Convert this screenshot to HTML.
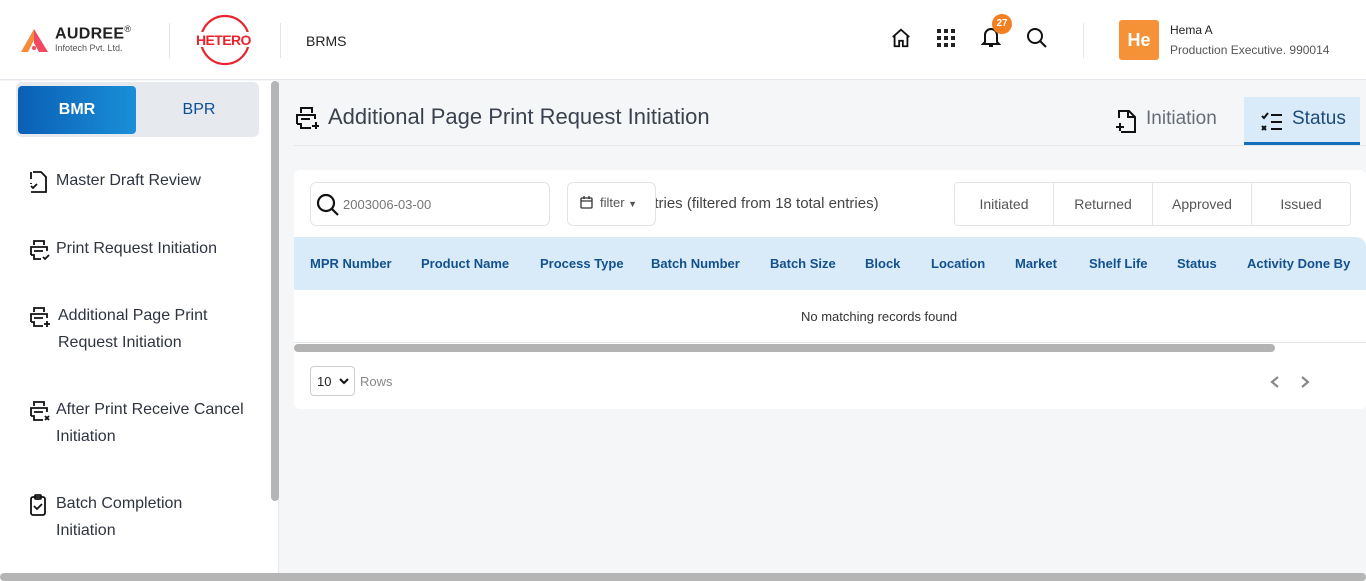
<!DOCTYPE html>
<html><head><meta charset="utf-8"><style>
*{box-sizing:border-box;margin:0;padding:0}
body{width:1366px;height:581px;overflow:hidden;font-family:"Liberation Sans",sans-serif;background:#f5f6f8;position:relative;color:#333}
.hdr{position:absolute;left:0;top:0;width:1366px;height:80px;background:#fff;border-bottom:1px solid #e3e6ea}
.abs{position:absolute}
.side{position:absolute;left:0;top:81px;width:279px;height:500px;background:#fff;border-right:1px solid #e6e8eb}
.tog{position:absolute;left:16px;top:1px;width:243px;height:55px;background:#e6e9ee;border-radius:6px}
.bmr{position:absolute;left:2px;top:4px;width:118px;height:48px;border-radius:4px;background:linear-gradient(90deg,#0a5fb4,#1a8fd8);color:#fff;font-size:16px;font-weight:bold;text-align:center;line-height:48px}
.bpr{position:absolute;left:124px;top:4px;width:118px;height:48px;color:#0d4f94;font-size:16px;text-align:center;line-height:48px}
.it{position:absolute;left:28px;font-size:16px;color:#2e3440;line-height:27px}
.it svg{position:absolute;left:0;top:4px}
.it span{display:block;padding-left:28px}
.th{position:absolute;top:256px;font-size:13px;font-weight:bold;color:#12508e}
</style></head><body>
<div class="hdr">
 <svg class="abs" style="left:21px;top:29px" width="27" height="23" viewBox="0 0 27 23"><path d="M13 0L0 23h7l6-12z" fill="#f58a3a"/><path d="M13 0l14 23h-9l-5-9z" fill="#ef4a60"/><circle cx="13" cy="19" r="2" fill="#ef4a60"/></svg>
 <div class="abs" style="left:55px;top:24px;font-size:16px;font-weight:bold;color:#222;letter-spacing:.3px">AUDREE<sup style="font-size:9px;font-weight:normal">®</sup></div>
 <div class="abs" style="left:55px;top:43px;font-size:9px;color:#555">Infotech Pvt. Ltd.</div>
 <div class="abs" style="left:169px;top:23px;width:1px;height:35px;background:#e5e5e5"></div>
 <svg class="abs" style="left:194px;top:14px" width="62" height="52" viewBox="0 0 62 52"><circle cx="31" cy="26" r="24" fill="none" stroke="#e8232e" stroke-width="2.2"/><rect x="0" y="18" width="62" height="15" fill="#fff"/></svg>
 <div class="abs" style="left:196px;top:32px;font-size:14px;font-weight:bold;color:#e8232e;letter-spacing:-.6px">HETERO</div>
 <div class="abs" style="left:280px;top:23px;width:1px;height:35px;background:#e5e5e5"></div>
 <div class="abs" style="left:306px;top:33px;font-size:14px;color:#222">BRMS</div>
 <svg class="abs" style="left:890px;top:27px" width="22" height="22" viewBox="0 0 24 24" fill="none" stroke="#111" stroke-width="2"><path d="M3 11L12 3l9 8M5 9v12h5v-6h4v6h5V9"/></svg>
 <svg class="abs" style="left:936px;top:28px" width="20" height="20" viewBox="0 0 20 20" fill="#222"><rect x="1" y="1" width="4" height="4"/><rect x="8" y="1" width="4" height="4"/><rect x="15" y="1" width="4" height="4"/><rect x="1" y="8" width="4" height="4"/><rect x="8" y="8" width="4" height="4"/><rect x="15" y="8" width="4" height="4"/><rect x="1" y="15" width="4" height="4"/><rect x="8" y="15" width="4" height="4"/><rect x="15" y="15" width="4" height="4"/></svg>
 <svg class="abs" style="left:981px;top:26px" width="20" height="22" viewBox="0 0 20 22" fill="none" stroke="#111" stroke-width="2"><path d="M4 16V9a6 6 0 0112 0v7l2 2H2zM8 20h4"/></svg>
 <div class="abs" style="left:992px;top:14px;width:20px;height:20px;border-radius:50%;background:#f47f20;color:#fff;font-size:10px;font-weight:bold;text-align:center;line-height:20px">27</div>
 <svg class="abs" style="left:1026px;top:27px" width="22" height="22" viewBox="0 0 22 22" fill="none" stroke="#111" stroke-width="2"><circle cx="9" cy="9" r="7"/><path d="M14 14l6 6"/></svg>
 <div class="abs" style="left:1083px;top:23px;width:1px;height:35px;background:#e5e5e5"></div>
 <div class="abs" style="left:1119px;top:20px;width:40px;height:40px;border-radius:3px;background:#f59237;color:#fff;font-size:18px;font-weight:bold;text-align:center;line-height:40px">He</div>
 <div class="abs" style="left:1170px;top:23px;font-size:12px;color:#222">Hema A</div>
 <div class="abs" style="left:1170px;top:43px;font-size:12px;color:#555">Production Executive. 990014</div>
</div>
<div class="side">
 <div class="tog"><div class="bmr">BMR</div><div class="bpr">BPR</div></div>
 <div class="it" style="top:86px"><svg width="20" height="22" viewBox="0 0 20 22" fill="none" stroke="#111" stroke-width="1.8"><path d="M5 1h8l5 5v15H3M3 13v-1M3 8V1"/><path d="M3 15l2 2 4-4"/></svg><span>Master Draft Review</span></div>
 <div class="it" style="top:154px"><svg width="24" height="22" viewBox="0 0 24 22" fill="none" stroke="#111" stroke-width="1.8"><path d="M6 6V2h10v4M3 16V8h16v4M3 16h3v4h7M6 12h9"/><path d="M15 18l2 2 4-4"/></svg><span>Print Request Initiation</span></div>
 <div class="it" style="top:221px"><svg width="24" height="22" viewBox="0 0 24 22" fill="none" stroke="#111" stroke-width="1.8"><path d="M6 6V2h10v4M3 16V8h16v4M3 16h3v4h9M6 12h9M19 15v6M16 18h6"/></svg><span style="padding-left:30px">Additional Page Print<br>Request Initiation</span></div>
 <div class="it" style="top:315px"><svg width="24" height="22" viewBox="0 0 24 22" fill="none" stroke="#111" stroke-width="1.8"><path d="M6 6V2h10v4M3 16V8h16v4M3 16h3v4h9M6 12h9M17 16l4 4M21 16l-4 4"/></svg><span>After Print Receive Cancel<br>Initiation</span></div>
 <div class="it" style="top:409px"><svg width="20" height="22" viewBox="0 0 20 22" fill="none" stroke="#111" stroke-width="1.8"><rect x="3" y="3" width="14" height="18" rx="2"/><rect x="7" y="1" width="6" height="4" rx="1"/><path d="M6 12l3 3 5-5"/></svg><span>Batch Completion<br>Initiation</span></div>
 <div class="abs" style="left:271px;top:0;width:8px;height:420px;border-radius:4px;background:#b5b5b5"></div>
</div>
<svg class="abs" style="left:295px;top:106px" width="26" height="24" viewBox="0 0 26 24" fill="none" stroke="#111" stroke-width="2"><path d="M6 7V2h11v5M2 18V9h18v4M2 18h4v4h10M6 13h9M21 16v7M17 20h7"/></svg>
<div class="abs" style="left:328px;top:104px;font-size:22px;color:#3a4250">Additional Page Print Request Initiation</div>
<svg class="abs" style="left:1115px;top:109px" width="22" height="25" viewBox="0 0 22 25" fill="none" stroke="#111" stroke-width="2"><path d="M4 9V2h10l6 6v15H6M13 2v6h7M1 18h8M5 14v8"/></svg>
<div class="abs" style="left:1146px;top:108px;font-size:19px;color:#666d78">Initiation</div>
<div class="abs" style="left:1244px;top:97px;width:116px;height:48px;background:#d9ebf8;border-bottom:3px solid #1470bd"></div>
<svg class="abs" style="left:1261px;top:112px" width="22" height="20" viewBox="0 0 22 20" fill="none" stroke="#111" stroke-width="2"><path d="M1 4l2 2 4-5M1 14l4 4M5 14l-4 4M10 3h11M10 10h11M10 17h11"/></svg>
<div class="abs" style="left:1292px;top:108px;font-size:19px;color:#1d4a78">Status</div>
<div class="abs" style="left:294px;top:145px;width:1072px;height:1px;background:#e3e6ea"></div>
<div class="abs" style="left:294px;top:170px;width:1072px;height:239px;background:#fff;border-radius:6px"></div>
<div class="abs" style="left:310px;top:182px;width:240px;height:44px;border:1px solid #e1e4e8;border-radius:6px;background:#fff"></div>
<svg class="abs" style="left:316px;top:193px" width="24" height="24" viewBox="0 0 24 24" fill="none" stroke="#111" stroke-width="2.2"><circle cx="10" cy="10" r="8"/><path d="M16 16l6 6"/></svg>
<div class="abs" style="left:343px;top:197px;font-size:13px;color:#777">2003006-03-00</div>
<div class="abs" style="left:646px;top:195px;font-size:15px;color:#444">ntries (filtered from 18 total entries)</div>
<div class="abs" style="left:567px;top:182px;width:89px;height:44px;border:1px solid #e1e4e8;border-radius:6px;background:#fff"></div>
<svg class="abs" style="left:580px;top:196px" width="13" height="13" viewBox="0 0 13 13" fill="none" stroke="#333" stroke-width="1.3"><rect x="1" y="2" width="11" height="10" rx="1"/><path d="M1 5h11M4 0v3M9 0v3"/></svg>
<div class="abs" style="left:600px;top:195px;font-size:13px;color:#555">filter <span style="font-size:9px">▼</span></div>
<div class="abs" style="left:954px;top:182px;width:397px;height:44px;border:1px solid #e1e4e8;border-radius:4px;display:flex;font-size:14px;color:#555">
 <div style="flex:1;text-align:center;line-height:42px;border-right:1px solid #e1e4e8">Initiated</div>
 <div style="flex:1;text-align:center;line-height:42px;border-right:1px solid #e1e4e8">Returned</div>
 <div style="flex:1;text-align:center;line-height:42px;border-right:1px solid #e1e4e8">Approved</div>
 <div style="flex:1;text-align:center;line-height:42px">Issued</div>
</div>
<div class="abs" style="left:294px;top:237px;width:1072px;height:53px;background:#d9ebf8;border-top-right-radius:10px"></div>
<div class="th" style="left:310px">MPR Number</div>
<div class="th" style="left:421px">Product Name</div>
<div class="th" style="left:540px">Process Type</div>
<div class="th" style="left:651px">Batch Number</div>
<div class="th" style="left:770px">Batch Size</div>
<div class="th" style="left:865px">Block</div>
<div class="th" style="left:931px">Location</div>
<div class="th" style="left:1015px">Market</div>
<div class="th" style="left:1089px">Shelf Life</div>
<div class="th" style="left:1177px">Status</div>
<div class="th" style="left:1247px">Activity Done By</div>
<div class="abs" style="left:801px;top:309px;font-size:13px;color:#333">No matching records found</div>
<div class="abs" style="left:294px;top:342px;width:1072px;height:1px;background:#e3e6ea"></div>
<div class="abs" style="left:294px;top:344px;width:981px;height:8px;border-radius:4px;background:#b3b3b3"></div>
<div class="abs" style="left:310px;top:366px;width:45px;height:30px;border:1px solid #ccc;border-radius:4px;font-size:13px;color:#222;padding:7px 0 0 6px">10</div>
<svg class="abs" style="left:339px;top:377px" width="10" height="8" viewBox="0 0 10 8" fill="none" stroke="#111" stroke-width="2"><path d="M1 2l4 4 4-4"/></svg>
<div class="abs" style="left:360px;top:374px;font-size:13px;color:#888">Rows</div>
<svg class="abs" style="left:1268px;top:375px" width="50" height="14" viewBox="0 0 50 14" fill="none" stroke="#888" stroke-width="2.2"><path d="M10 2L4 7l6 5M34 2l6 5-6 5"/></svg>
<div class="abs" style="left:0;top:573px;width:1366px;height:8px;border-radius:4px;background:#b5b5b5"></div>
</body></html>
